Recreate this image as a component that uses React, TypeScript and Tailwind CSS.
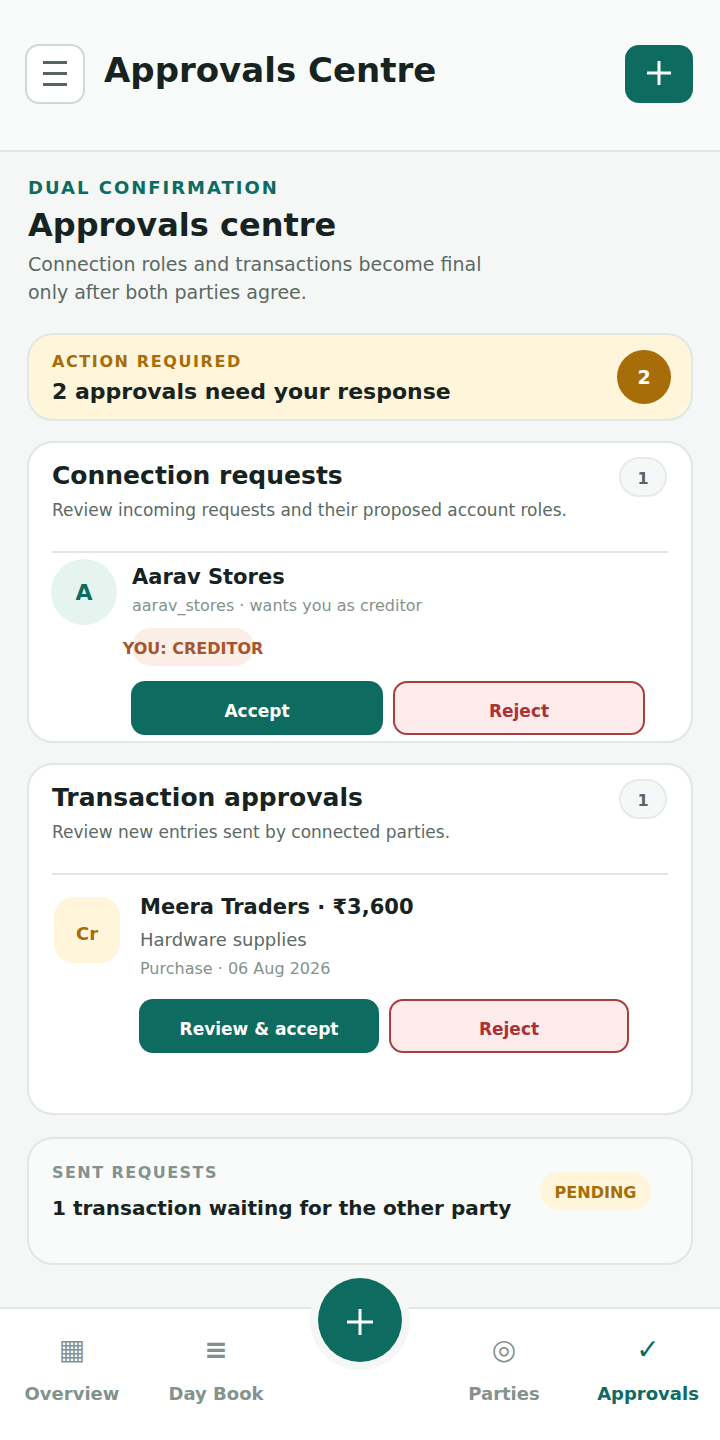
const card = 'mx-[27px] rounded-[26px] border-2 border-[#e0e8e5]';

function CountPill() {
  return (
    <span className="-mt-[1px] w-[48px] h-[40px] pt-[3px] rounded-full border-2 border-[#e6ecea] bg-[#f6f8f7] flex items-center justify-center text-[16px] font-bold text-[#55655f] shrink-0">
      1
    </span>
  );
}

function CardHead({ title, desc }: { title: string; desc: string }) {
  return (
    <div className="flex justify-between items-start pt-[15px] pl-[23px] pr-[24px] h-[108px]">
      <div>
        <h2 className="text-[25px] leading-[36px] font-bold text-[#17231f]">{title}</h2>
        <p className="text-[17px] leading-[28px] mt-[2px] text-[#5b6964]">{desc}</p>
      </div>
      <CountPill />
    </div>
  );
}

function Buttons({ accept, width }: { accept: string; width: string }) {
  return (
    <div className="flex gap-[10px]">
      <button className={`${width} h-[54px] pt-[8px] rounded-[14px] bg-[#0e6b5f] text-white text-[17px] font-bold`}>{accept}</button>
      <button className={`${width} h-[54px] pt-[8px] rounded-[14px] border-2 border-[#a83f3f] bg-[#fdeaea] text-[#a83236] text-[17px] font-bold`}>Reject</button>
    </div>
  );
}

function NavItem({ icon, label, active }: { icon: string; label: string; active?: boolean }) {
  const color = active ? 'text-[#0e6b5f]' : 'text-[#84928d]';
  return (
    <div className={`w-[144px] flex flex-col items-center font-bold ${color}`}>
      <span className="h-[42px] text-[28px] leading-[42px]">{icon}</span>
      <span className="mt-[10px] text-[18px] leading-[26px] whitespace-nowrap">{label}</span>
    </div>
  );
}

export default function App() {
  return (
    <div className="relative w-[720px] h-[1440px] overflow-hidden bg-[#f4f7f6] flex flex-col font-['DejaVu_Sans',sans-serif]">
      <header className="h-[152px] shrink-0 border-b-2 border-[#e0e8e5] bg-[#f9fbfa] flex items-center pl-[25px] pr-[27px] pb-[2px]">
        <button className="w-[60px] h-[60px] pb-[2px] rounded-[14px] border-2 border-[#cfdad6] bg-white flex items-center justify-center text-[#55655f]">
          <svg width="24" height="25" viewBox="0 0 24 25" fill="none" stroke="currentColor" strokeWidth="3">
            <path d="M0 1.5h24M0 12.5h24M0 23.5h24" />
          </svg>
        </button>
        <h1 className="ml-[19px] text-[34px] leading-[44px] font-bold text-[#17231f] mb-[8px]">Approvals Centre</h1>
        <button className="ml-auto w-[68px] h-[58px] pb-[2px] rounded-[14px] bg-[#0e6b5f] flex items-center justify-center">
          <svg width="26" height="26" viewBox="0 0 26 26" fill="none" stroke="white" strokeWidth="3">
            <path d="M13 1v24M1 13h24" />
          </svg>
        </button>
      </header>

      <section className="pt-[24px] px-[28px] h-[181px] shrink-0">
        <p className="text-[18px] leading-[24px] font-bold tracking-[2px] text-[#0e6b5f]">DUAL CONFIRMATION</p>
        <h2 className="text-[32px] leading-[42px] font-bold text-[#17231f] mt-[4px]">Approvals centre</h2>
        <p className="text-[19px] leading-[28px] mt-[4px] text-[#5b6964]">
          Connection roles and transactions become final
          <br />
          only after both parties agree.
        </p>
      </section>

      <div className={`${card} h-[88px] bg-[#fff5da] flex items-center justify-between pl-[23px] pr-[20px]`}>
        <div className="pt-[4px]">
          <p className="text-[16px] leading-[22px] font-bold tracking-[1.6px] text-[#a66d08]">ACTION REQUIRED</p>
          <p className="text-[22px] leading-[30px] mt-[4px] font-bold text-[#17231f]">2 approvals need your response</p>
        </div>
        <span className="w-[54px] h-[54px] rounded-full bg-[#a66d08] text-white text-[19px] font-bold flex items-center justify-center">2</span>
      </div>

      <div className={`${card} mt-[20px] h-[302px] bg-white overflow-hidden`}>
        <CardHead title="Connection requests" desc="Review incoming requests and their proposed account roles." />
        <div className="mx-[23px] h-[2px] bg-[#e0e8e5]" />
        <div className="flex pl-[22px] pt-[6px]">
          <span className="w-[66px] h-[66px] rounded-full bg-[#e6f4f0] text-[#0e6b5f] text-[22px] font-bold flex items-center justify-center shrink-0">A</span>
          <div className="ml-[15px]">
            <p className="text-[21px] leading-[30px] mt-[3px] font-bold text-[#17231f]">Aarav Stores</p>
            <p className="text-[16px] leading-[24px] mt-[2px] text-[#84928d]">aarav_stores · wants you as creditor</p>
            <span className="mt-[10px] w-[122px] h-[38px] pt-[4px] rounded-full bg-[#fbeee6] text-[#a45631] text-[16px] font-bold flex items-center justify-center whitespace-nowrap">YOU: CREDITOR</span>
            <div className="mt-[15px] -ml-[1px]">
              <Buttons accept="Accept" width="w-[252px]" />
            </div>
          </div>
        </div>
      </div>

      <div className={`${card} mt-[20px] h-[352px] bg-white`}>
        <CardHead title="Transaction approvals" desc="Review new entries sent by connected parties." />
        <div className="mx-[23px] h-[2px] bg-[#e0e8e5]" />
        <div className="flex pl-[25px] pt-[22px]">
          <span className="w-[66px] h-[66px] rounded-[20px] bg-[#fff5da] text-[#a66d08] text-[18px] font-bold pt-[6px] flex items-center justify-center shrink-0">Cr</span>
          <div className="ml-[20px] -mt-[5px]">
            <p className="text-[21px] leading-[30px] font-bold text-[#17231f]">Meera Traders · ₹3,600</p>
            <p className="text-[18px] leading-[26px] mt-[5px] text-[#5b6964]">Hardware supplies</p>
            <p className="text-[16px] leading-[24px] mt-[4px] text-[#84928d]">Purchase · 06 Aug 2026</p>
            <div className="mt-[18px] -ml-[1px]">
              <Buttons accept="Review & accept" width="w-[240px]" />
            </div>
          </div>
        </div>
      </div>

      <div className={`${card} mt-[22px] h-[128px] bg-[#f9fbfa] flex justify-between pl-[23px] pr-[40px]`}>
        <div className="pt-[23px]">
          <p className="text-[16px] leading-[22px] font-bold tracking-[1.45px] text-[#84928d]">SENT REQUESTS</p>
          <p className="text-[20px] leading-[30px] mt-[9px] font-bold text-[#17231f] whitespace-nowrap">1 transaction waiting for the other party</p>
        </div>
        <span className="mt-[33px] w-[111px] h-[38px] pt-[3px] rounded-full bg-[#fff5da] text-[#a66d08] text-[16px] font-bold flex items-center justify-center">PENDING</span>
      </div>

      <nav className="absolute bottom-0 left-0 w-[720px] h-[133px] border-t-2 border-[#e0e8e5] bg-white flex pt-[20px]">
        <NavItem icon="▦" label="Overview" />
        <NavItem icon="≡" label="Day Book" />
        <div className="w-[144px]" />
        <NavItem icon="◎" label="Parties" />
        <NavItem icon="✓" label="Approvals" active />
      </nav>
      <button className="absolute left-[318px] top-[1278px] w-[84px] h-[84px] pt-[4px] rounded-full bg-[#0e6b5f] ring-[8px] ring-[#f4f7f6] flex items-center justify-center">
        <svg width="28" height="28" viewBox="0 0 28 28" fill="none" stroke="white" strokeWidth="3">
          <path d="M14 1v26M1 14h26" />
        </svg>
      </button>
    </div>
  );
}
